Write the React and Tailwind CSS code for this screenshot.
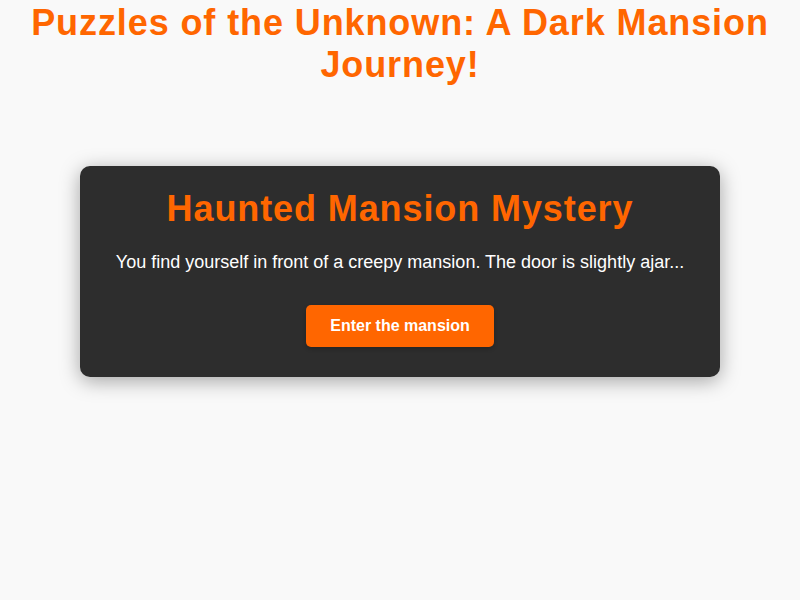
export default function App() {
  return (
    <div className="min-h-screen bg-[#f9f9f9] font-['Liberation_Sans',Arial,sans-serif] text-center">
      <h1 className="text-[36px] leading-[42px] tracking-[0.9px] font-bold text-[#ff6600] pt-[2px] px-5">
        Puzzles of the Unknown: A Dark Mansion Journey!
      </h1>

      <div className="mx-auto mt-[80px] w-[640px] rounded-[10px] bg-[#2d2d2d] px-5 pt-[22px] pb-[30px] shadow-[0_4px_20px_rgba(0,0,0,0.35)]">
        <h2 className="text-[36px] leading-[1.15] tracking-[0.9px] font-bold text-[#ff6600]">
          Haunted Mansion Mystery
        </h2>
        <p className="mt-[20px] text-[18px] text-white">
          You find yourself in front of a creepy mansion. The door is slightly ajar...
        </p>
        <button className="mt-[29px] h-[42px] w-[188px] rounded-[5px] bg-[#ff6600] text-[16px] font-bold text-white shadow-[0_2px_4px_rgba(0,0,0,0.2)]">
          Enter the mansion
        </button>
      </div>
    </div>
  );
}
